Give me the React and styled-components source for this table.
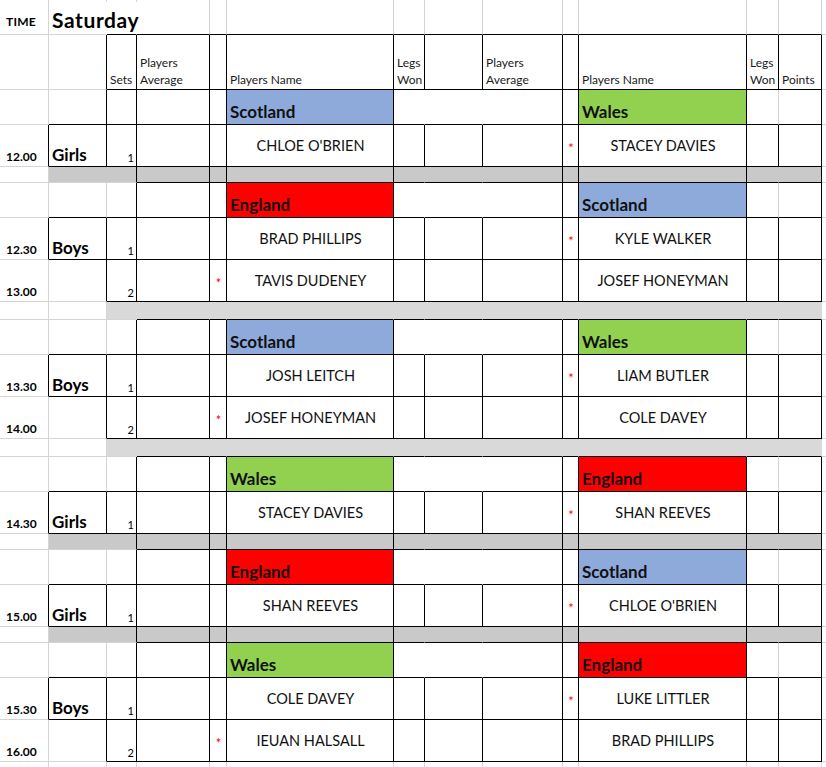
import styled, { createGlobalStyle } from "styled-components";

const GlobalStyle = createGlobalStyle`
  html, body {
    margin: 0;
    padding: 0;
    background: #fff;
    overflow: hidden;
  }
  body {
    font-family: Lato, "Open Sans", sans-serif;
    color: #000;
  }
`;

const GRID = '#d4d4d4';
const BLACK = '#000';
const TEAM_COLOR = { Scotland: '#8eaadb', Wales: '#92d050', England: '#ff0000' };

// column widths: row-header strip, A..M, and the sliver of N
const COLS = [2, 47, 58, 30, 73, 17, 167, 31, 58, 80, 16, 168, 32, 43, 4];

// right edge of each column per kind of row: g = gridline, k = black, n = hidden
const RIGHT = {
  strip: 'ggggggggggggggg',
  time: 'ggnnggggggggggg',
  header: 'ggkkkkkkkkkkkkg',
  teamFirst: 'ggkkkkknnkkkgkg',
  team: 'gggkkkknnkkkgkg',
  p1: 'gkkkkkkkkkkkkkg',
  p2: 'ggkkkkkkkkkkkkg',
  dark: 'ggnkkkknnkkknkg',
  light: 'gggnnnnnnnnnnng',
  end: 'ggggggggggggggg',
};

// columns whose top / bottom edge is black
const EDGE = { header: [3, 13], teamFirst: [3, 13], team: [4, 13], p1: [2, 13], p2: [3, 13] };
const BAND = { dark: [2, 13, '#c9c9c9'], light: [3, 13, '#d9d9d9'] };

const blocks = [
  { cat: 'Girls', teams: ['Scotland', 'Wales'], sep: 'dark', games: [
    { time: '12.00', left: "CHLOE O'BRIEN", right: 'STACEY DAVIES', mark: 'right' },
  ] },
  { cat: 'Boys', teams: ['England', 'Scotland'], sep: 'light', games: [
    { time: '12.30', left: 'BRAD PHILLIPS', right: 'KYLE WALKER', mark: 'right' },
    { time: '13.00', left: 'TAVIS DUDENEY', right: 'JOSEF HONEYMAN', mark: 'left' },
  ] },
  { cat: 'Boys', teams: ['Scotland', 'Wales'], sep: 'light', games: [
    { time: '13.30', left: 'JOSH LEITCH', right: 'LIAM BUTLER', mark: 'right' },
    { time: '14.00', left: 'JOSEF HONEYMAN', right: 'COLE DAVEY', mark: 'left' },
  ] },
  { cat: 'Girls', teams: ['Wales', 'England'], sep: 'dark', games: [
    { time: '14.30', left: 'STACEY DAVIES', right: 'SHAN REEVES', mark: 'right' },
  ] },
  { cat: 'Girls', teams: ['England', 'Scotland'], sep: 'dark', games: [
    { time: '15.00', left: 'SHAN REEVES', right: "CHLOE O'BRIEN", mark: 'right' },
  ] },
  { cat: 'Boys', teams: ['Wales', 'England'], sep: 'end', games: [
    { time: '15.30', left: 'COLE DAVEY', right: 'LUKE LITTLER', mark: 'right' },
    { time: '16.00', left: 'IEUAN HALSALL', right: 'BRAD PHILLIPS', mark: 'left' },
  ] },
];

const inRange = (range, c) => range && c >= range[0] && c <= range[1];

function buildRows() {
  const rows = [
    { kind: 'strip', h: 2, cells: {} },
    { kind: 'time', h: 33, cells: {
      1: <TimeLabel>TIME</TimeLabel>,
      2: <DayTitle>Saturday</DayTitle>,
    } },
    { kind: 'header', h: 55, cells: {
      3: <HeadText>Sets</HeadText>,
      4: <HeadText>Players<br />Average</HeadText>,
      6: <HeadText>Players Name</HeadText>,
      7: <HeadText>Legs<br />Won</HeadText>,
      9: <HeadText>Players<br />Average</HeadText>,
      11: <HeadText>Players Name</HeadText>,
      12: <HeadText>Legs<br />Won</HeadText>,
      13: <HeadText>Points</HeadText>,
    } },
  ];

  blocks.forEach((block, i) => {
    rows.push({
      kind: i === 0 ? 'teamFirst' : 'team',
      h: 35,
      teams: block.teams,
      cells: {
        6: <TeamName>{block.teams[0]}</TeamName>,
        11: <TeamName>{block.teams[1]}</TeamName>,
      },
    });
    block.games.forEach((game, g) => {
      rows.push({
        kind: g === 0 ? 'p1' : 'p2',
        h: 42,
        cells: {
          1: <Time>{game.time}</Time>,
          2: g === 0 ? <Category>{block.cat}</Category> : null,
          3: { node: <SetNo>{g + 1}</SetNo>, align: 'flex-end' },
          5: game.mark === 'left' ? { node: <Mark>*</Mark>, align: 'center', valign: 'center' } : null,
          6: { node: <PlayerName>{game.left}</PlayerName>, align: 'center', valign: 'center' },
          10: game.mark === 'right' ? { node: <Mark>*</Mark>, align: 'center', valign: 'center' } : null,
          11: { node: <PlayerName>{game.right}</PlayerName>, align: 'center', valign: 'center' },
        },
      });
    });
    if (block.sep === 'end') {
      rows.push({ kind: 'end', h: 6, cells: {} });
    } else {
      rows.push({ kind: block.sep, h: block.sep === 'dark' ? 16 : 18, cells: {} });
    }
  });
  return rows;
}

function fillFor(row, c) {
  const band = BAND[row.kind];
  if (band && inRange(band, c)) return band[2];
  if (row.teams && c === 6) return TEAM_COLOR[row.teams[0]];
  if (row.teams && c === 11) return TEAM_COLOR[row.teams[1]];
  return '#fff';
}

function App() {
  const rows = buildRows();

  return (
    <>
      <GlobalStyle />
      <Sheet $cols={COLS} $rows={rows.map(r => r.h)}>
        {rows.map((row, r) => {
          const next = rows[r + 1];
          return COLS.map((_, c) => {
            const fill = fillFor(row, c);
            const edge = RIGHT[row.kind][c];
            const right = edge === 'k' ? BLACK : edge === 'n' ? fill : GRID;
            const blackBottom = inRange(EDGE[row.kind], c) || (next && inRange(EDGE[next.kind], c));
            const raw = row.cells[c];
            const content = raw && raw.node !== undefined ? raw : { node: raw };
            return (
              <Cell
                key={`${r}-${c}`}
                $fill={fill}
                $right={right}
                $bottom={blackBottom ? BLACK : GRID}
                $align={content.align}
                $valign={content.valign}
                $over={row.kind === 'time' && c === 2}
              >
                {content.node}
              </Cell>
            );
          });
        })}
      </Sheet>
    </>
  );
}

export default App;

const Sheet = styled.div`
  display: grid;
  grid-template-columns: ${p => p.$cols.map(w => `${w}px`).join(' ')};
  grid-template-rows: ${p => p.$rows.map(h => `${h}px`).join(' ')};
  width: max-content;
`;

const Cell = styled.div`
  box-sizing: border-box;
  display: flex;
  align-items: ${p => p.$valign || 'flex-end'};
  justify-content: ${p => p.$align || 'flex-start'};
  padding: 0 2px 2px 3px;
  background: ${p => p.$fill};
  border-right: 1px solid ${p => p.$right};
  border-bottom: 1px solid ${p => p.$bottom};
  overflow: ${p => (p.$over ? 'visible' : 'hidden')};
  z-index: ${p => (p.$over ? 1 : 'auto')};
  white-space: nowrap;
`;

const TimeLabel = styled.span`
  font-size: 12px;
  font-weight: 700;
  line-height: 1;
  padding: 0 0 4px 1px;
  letter-spacing: 0.2px;
`;

const DayTitle = styled.span`
  font-size: 21px;
  font-weight: 700;
  line-height: 1;
  letter-spacing: 0.6px;
  padding-bottom: 2px;
`;

const HeadText = styled.span`
  font-size: 12px;
  line-height: 17px;
  color: #1a1a1a;
  white-space: nowrap;
  margin-bottom: -1px;
`;

const TeamName = styled.span`
  font-size: 17px;
  font-weight: 700;
  line-height: 1;
  padding-bottom: 2px;
  color: #111;
`;

const Time = styled.span`
  font-size: 12px;
  font-weight: 700;
  line-height: 1;
  padding: 0 0 1px 1px;
`;

const Category = styled.span`
  font-size: 17px;
  font-weight: 700;
  line-height: 1;
  padding-bottom: 1px;
`;

const SetNo = styled.span`
  font-size: 11px;
  line-height: 1;
  padding-bottom: 1px;
`;

const PlayerName = styled.span`
  font-size: 14.5px;
  line-height: 1;
  color: #111;
  margin-top: 4px;
`;

const Mark = styled.span`
  font-size: 13px;
  line-height: 1;
  color: #ff0000;
  margin-top: 8px;
`;
